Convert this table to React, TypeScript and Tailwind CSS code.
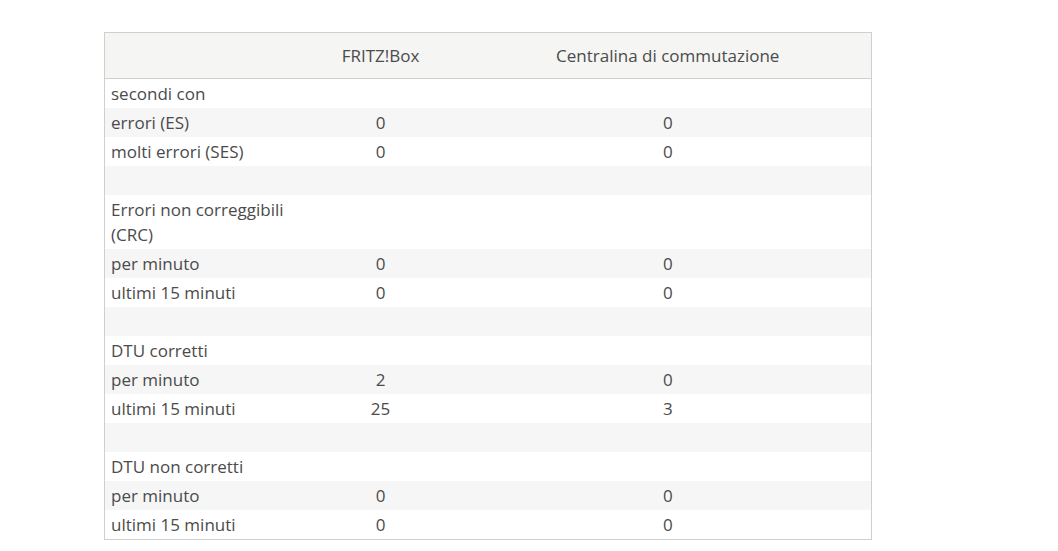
import React from "react";

type Row = { label: string; a?: string; b?: string; striped: boolean };

const rows: Row[] = [
  { label: "secondi con", striped: false },
  { label: "errori (ES)", a: "0", b: "0", striped: true },
  { label: "molti errori (SES)", a: "0", b: "0", striped: false },
  { label: "", striped: true },
  { label: "Errori non correggibili (CRC)", striped: false },
  { label: "per minuto", a: "0", b: "0", striped: true },
  { label: "ultimi 15 minuti", a: "0", b: "0", striped: false },
  { label: "", striped: true },
  { label: "DTU corretti", striped: false },
  { label: "per minuto", a: "2", b: "0", striped: true },
  { label: "ultimi 15 minuti", a: "25", b: "3", striped: false },
  { label: "", striped: true },
  { label: "DTU non corretti", striped: false },
  { label: "per minuto", a: "0", b: "0", striped: true },
  { label: "ultimi 15 minuti", a: "0", b: "0", striped: false },
];

export default function App() {
  return (
    <div
      className="w-[1058px] h-[551px] bg-white pt-[32px] pl-[104px]"
      style={{ fontFamily: '"Open Sans", "Noto Sans", sans-serif' }}
    >
      <table className="w-[767px] border border-[#cfcfcf] border-collapse text-[17px] text-[#4b4b4b] table-fixed">
        <colgroup>
          <col className="w-[192px]" />
          <col className="w-[168px]" />
          <col className="w-[407px]" />
        </colgroup>
        <thead>
          <tr className="bg-[#f5f5f4] border-b border-[#cfcfcf] h-[46px]">
            <th className="font-normal"></th>
            <th className="font-normal text-center">FRITZ!Box</th>
            <th className="font-normal text-center">Centralina di commutazione</th>
          </tr>
        </thead>
        <tbody>
          {rows.map((r, i) => (
            <tr key={i} className={r.striped ? "bg-[#f6f6f6]" : "bg-white"}>
              <td className="pl-[6px] pr-[6px] py-[2px] leading-[25px] h-[29px] align-middle">{r.label}</td>
              <td className="text-center py-[2px] leading-[25px]">{r.a ?? ""}</td>
              <td className="text-center py-[2px] leading-[25px]">{r.b ?? ""}</td>
            </tr>
          ))}
        </tbody>
      </table>
    </div>
  );
}
